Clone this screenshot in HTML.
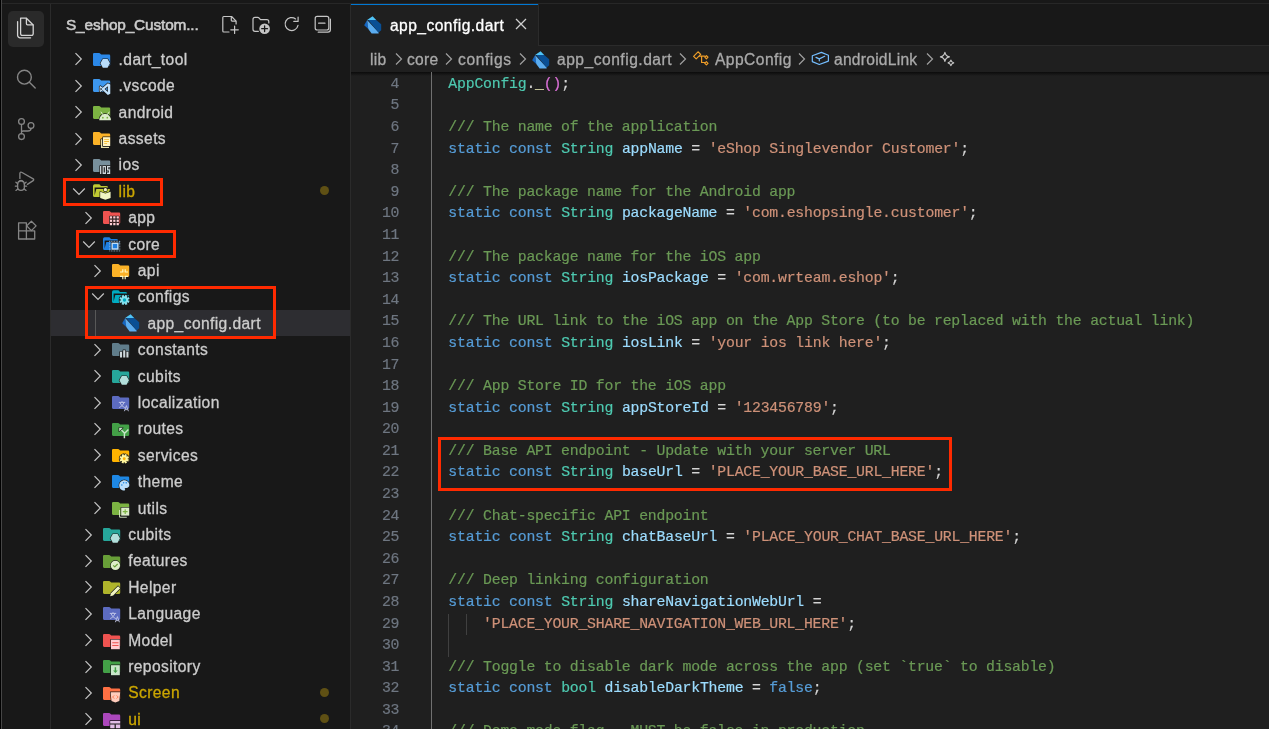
<!DOCTYPE html><html><head><meta charset="utf-8"><style>
*{margin:0;padding:0;box-sizing:border-box}
html,body{width:1269px;height:729px;overflow:hidden;background:#181818}
body{position:relative;font-family:"Liberation Sans",sans-serif;-webkit-font-smoothing:antialiased}
.a{position:absolute}
#root{position:absolute;left:0;top:0;width:1269px;height:729px;will-change:transform}
.mono{font-family:"Liberation Mono",monospace;font-size:14.8px;letter-spacing:-0.207px;white-space:pre;-webkit-text-stroke:0.2px currentColor}
.ln{position:absolute;left:359.3px;width:40px;text-align:right;color:#6e7681}
.cl{position:absolute;left:431px;color:#d4d4d4}
.c{color:#6a9955}.k{color:#569cd6}.t{color:#4ec9b0}.v{color:#9cdcfe}.s{color:#ce9178}.f{color:#dcdcaa}.p{color:#da70d6}
.row{position:absolute;left:51px;width:299px;height:26.4px}
.lbl{position:absolute;top:0;font-size:15.6px;line-height:26.4px;color:#cccccc;white-space:nowrap;letter-spacing:0.4px;-webkit-text-stroke:0.3px currentColor}
.red{position:absolute;border:3px solid #ff2a00}
.bc{position:absolute;top:47px;font-size:15.6px;line-height:26px;color:#a9a9a9;white-space:nowrap;letter-spacing:0.25px;-webkit-text-stroke:0.3px currentColor}
</style></head><body><div id="root"><div class="a" style="left:0;top:3px;width:1269px;height:1px;background:#272727"></div><div class="a" style="left:0;top:0;width:1px;height:729px;background:#000"></div><div class="a" style="left:1px;top:0;width:1px;height:729px;background:#464646"></div><div class="a" style="left:50px;top:4px;width:1px;height:725px;background:#2b2b2b"></div><div class="a" style="left:350px;top:4px;width:1px;height:725px;background:#2b2b2b"></div><div class="a" style="left:351px;top:4px;width:918px;height:41px;background:#181818"></div><div class="a" style="left:351px;top:45px;width:918px;height:1px;background:#2b2b2b"></div><div class="a" style="left:351px;top:46px;width:918px;height:683px;background:#1f1f1f"></div><div class="a" style="left:351px;top:4px;width:187px;height:42px;background:#1f1f1f"></div><div class="a" style="left:351px;top:4px;width:187px;height:1.2px;background:#0078d4"></div><div class="a" style="left:538px;top:4px;width:1px;height:41px;background:#2b2b2b"></div><div class="a" style="left:351px;top:72px;width:918px;height:4px;background:linear-gradient(#0b0b0b,rgba(31,31,31,0))"></div><div class="a" style="left:351px;top:72px;width:918px;height:657px;overflow:hidden"><div class="a" style="left:-351px;top:-72px;width:1269px;height:729px"><div class="ln mono" style="top:73.90px;line-height:21.586px">4</div><div class="cl mono" style="top:73.90px;line-height:21.586px">  <span class="t">AppConfig</span>.<span class="f">_</span><span class="p">()</span>;</div><div class="ln mono" style="top:95.49px;line-height:21.586px">5</div><div class="cl mono" style="top:95.49px;line-height:21.586px"></div><div class="ln mono" style="top:117.07px;line-height:21.586px">6</div><div class="cl mono" style="top:117.07px;line-height:21.586px">  <span class="c">/// The name of the application</span></div><div class="ln mono" style="top:138.66px;line-height:21.586px">7</div><div class="cl mono" style="top:138.66px;line-height:21.586px">  <span class="k">static</span> <span class="k">const</span> <span class="t">String</span> <span class="v">appName</span> = <span class="s">&#x27;eShop Singlevendor Customer&#x27;</span>;</div><div class="ln mono" style="top:160.24px;line-height:21.586px">8</div><div class="cl mono" style="top:160.24px;line-height:21.586px"></div><div class="ln mono" style="top:181.83px;line-height:21.586px">9</div><div class="cl mono" style="top:181.83px;line-height:21.586px">  <span class="c">/// The package name for the Android app</span></div><div class="ln mono" style="top:203.42px;line-height:21.586px">10</div><div class="cl mono" style="top:203.42px;line-height:21.586px">  <span class="k">static</span> <span class="k">const</span> <span class="t">String</span> <span class="v">packageName</span> = <span class="s">&#x27;com.eshopsingle.customer&#x27;</span>;</div><div class="ln mono" style="top:225.00px;line-height:21.586px">11</div><div class="cl mono" style="top:225.00px;line-height:21.586px"></div><div class="ln mono" style="top:246.59px;line-height:21.586px">12</div><div class="cl mono" style="top:246.59px;line-height:21.586px">  <span class="c">/// The package name for the iOS app</span></div><div class="ln mono" style="top:268.17px;line-height:21.586px">13</div><div class="cl mono" style="top:268.17px;line-height:21.586px">  <span class="k">static</span> <span class="k">const</span> <span class="t">String</span> <span class="v">iosPackage</span> = <span class="s">&#x27;com.wrteam.eshop&#x27;</span>;</div><div class="ln mono" style="top:289.76px;line-height:21.586px">14</div><div class="cl mono" style="top:289.76px;line-height:21.586px"></div><div class="ln mono" style="top:311.35px;line-height:21.586px">15</div><div class="cl mono" style="top:311.35px;line-height:21.586px">  <span class="c">/// The URL link to the iOS app on the App Store (to be replaced with the actual link)</span></div><div class="ln mono" style="top:332.93px;line-height:21.586px">16</div><div class="cl mono" style="top:332.93px;line-height:21.586px">  <span class="k">static</span> <span class="k">const</span> <span class="t">String</span> <span class="v">iosLink</span> = <span class="s">&#x27;your ios link here&#x27;</span>;</div><div class="ln mono" style="top:354.52px;line-height:21.586px">17</div><div class="cl mono" style="top:354.52px;line-height:21.586px"></div><div class="ln mono" style="top:376.10px;line-height:21.586px">18</div><div class="cl mono" style="top:376.10px;line-height:21.586px">  <span class="c">/// App Store ID for the iOS app</span></div><div class="ln mono" style="top:397.69px;line-height:21.586px">19</div><div class="cl mono" style="top:397.69px;line-height:21.586px">  <span class="k">static</span> <span class="k">const</span> <span class="t">String</span> <span class="v">appStoreId</span> = <span class="s">&#x27;123456789&#x27;</span>;</div><div class="ln mono" style="top:419.28px;line-height:21.586px">20</div><div class="cl mono" style="top:419.28px;line-height:21.586px"></div><div class="ln mono" style="top:440.86px;line-height:21.586px">21</div><div class="cl mono" style="top:440.86px;line-height:21.586px">  <span class="c">/// Base API endpoint - Update with your server URL</span></div><div class="ln mono" style="top:462.45px;line-height:21.586px">22</div><div class="cl mono" style="top:462.45px;line-height:21.586px">  <span class="k">static</span> <span class="k">const</span> <span class="t">String</span> <span class="v">baseUrl</span> = <span class="s">&#x27;PLACE_YOUR_BASE_URL_HERE&#x27;</span>;</div><div class="ln mono" style="top:484.03px;line-height:21.586px">23</div><div class="cl mono" style="top:484.03px;line-height:21.586px"></div><div class="ln mono" style="top:505.62px;line-height:21.586px">24</div><div class="cl mono" style="top:505.62px;line-height:21.586px">  <span class="c">/// Chat-specific API endpoint</span></div><div class="ln mono" style="top:527.21px;line-height:21.586px">25</div><div class="cl mono" style="top:527.21px;line-height:21.586px">  <span class="k">static</span> <span class="k">const</span> <span class="t">String</span> <span class="v">chatBaseUrl</span> = <span class="s">&#x27;PLACE_YOUR_CHAT_BASE_URL_HERE&#x27;</span>;</div><div class="ln mono" style="top:548.79px;line-height:21.586px">26</div><div class="cl mono" style="top:548.79px;line-height:21.586px"></div><div class="ln mono" style="top:570.38px;line-height:21.586px">27</div><div class="cl mono" style="top:570.38px;line-height:21.586px">  <span class="c">/// Deep linking configuration</span></div><div class="ln mono" style="top:591.96px;line-height:21.586px">28</div><div class="cl mono" style="top:591.96px;line-height:21.586px">  <span class="k">static</span> <span class="k">const</span> <span class="t">String</span> <span class="v">shareNavigationWebUrl</span> =</div><div class="ln mono" style="top:613.55px;line-height:21.586px">29</div><div class="cl mono" style="top:613.55px;line-height:21.586px">      <span class="s">&#x27;PLACE_YOUR_SHARE_NAVIGATION_WEB_URL_HERE&#x27;</span>;</div><div class="ln mono" style="top:635.14px;line-height:21.586px">30</div><div class="cl mono" style="top:635.14px;line-height:21.586px"></div><div class="ln mono" style="top:656.72px;line-height:21.586px">31</div><div class="cl mono" style="top:656.72px;line-height:21.586px">  <span class="c">/// Toggle to disable dark mode across the app (set `true` to disable)</span></div><div class="ln mono" style="top:678.31px;line-height:21.586px">32</div><div class="cl mono" style="top:678.31px;line-height:21.586px">  <span class="k">static</span> <span class="k">const</span> <span class="t">bool</span> <span class="v">disableDarkTheme</span> = <span class="k">false</span>;</div><div class="ln mono" style="top:699.89px;line-height:21.586px">33</div><div class="cl mono" style="top:699.89px;line-height:21.586px"></div><div class="ln mono" style="top:721.48px;line-height:21.586px">34</div><div class="cl mono" style="top:721.48px;line-height:21.586px">  <span class="c">/// Demo mode flag - MUST be false in production</span></div><div class="a" style="left:431px;top:72px;width:1px;height:657px;background:#707070"></div><div class="a" style="left:448.3px;top:613.55px;width:1px;height:21.59px;background:#404040"></div><div class="a" style="left:448.3px;top:635.14px;width:1px;height:21.59px;background:#404040"></div><div class="a" style="left:465.7px;top:613.55px;width:1px;height:21.59px;background:#404040"></div></div></div><div class="red" style="left:438px;top:437px;width:514px;height:54px"></div><div class="a" style="left:390px;top:4.6px;font-size:15.6px;line-height:41px;color:#ffffff;white-space:nowrap;letter-spacing:0.45px;-webkit-text-stroke:0.3px currentColor">app_config.dart</div><svg class="a" style="left:515px;top:18px" width="12" height="12" viewBox="0 0 12 12"><path d="M1 1L11 11M11 1L1 11" stroke="#d0d0d0" stroke-width="1.3" fill="none"/></svg><svg class="a" style="left:364px;top:16px" width="18" height="18" viewBox="0 0 18 18"><polygon fill="#4fc3f7" points="3.1,3.9 8.6,0.3 12.2,4"/><polygon fill="#1565c0" points="0.2,9.3 3.1,3.9 4.3,13"/><polygon fill="#5aacf0" points="3.1,3.9 14.6,16.6 14.6,17.4 7.6,17.4 4.3,13"/><polygon fill="#0a4f94" points="4.2,3.9 12.2,3.9 17.2,8.2 17.2,14.3 14.6,16.6"/></svg><div class="bc" style="left:370px">lib</div><svg class="a" style="left:394.5px;top:52px" width="8" height="14" viewBox="0 0 8 14"><path d="M1 1.5L6.5 7L1 12.5" stroke="#a0a0a0" stroke-width="1.2" fill="none"/></svg><div class="bc" style="left:407px">core</div><svg class="a" style="left:445px;top:52px" width="8" height="14" viewBox="0 0 8 14"><path d="M1 1.5L6.5 7L1 12.5" stroke="#a0a0a0" stroke-width="1.2" fill="none"/></svg><div class="bc" style="left:458px;letter-spacing:0.6px">configs</div><svg class="a" style="left:518.5px;top:52px" width="8" height="14" viewBox="0 0 8 14"><path d="M1 1.5L6.5 7L1 12.5" stroke="#a0a0a0" stroke-width="1.2" fill="none"/></svg><svg class="a" style="left:531.5px;top:51px" width="18" height="18" viewBox="0 0 18 18"><polygon fill="#4fc3f7" points="3.1,3.9 8.6,0.3 12.2,4"/><polygon fill="#1565c0" points="0.2,9.3 3.1,3.9 4.3,13"/><polygon fill="#5aacf0" points="3.1,3.9 14.6,16.6 14.6,17.4 7.6,17.4 4.3,13"/><polygon fill="#0a4f94" points="4.2,3.9 12.2,3.9 17.2,8.2 17.2,14.3 14.6,16.6"/></svg><div class="bc" style="left:557px;letter-spacing:0.5px">app_config.dart</div><svg class="a" style="left:679px;top:52px" width="8" height="14" viewBox="0 0 8 14"><path d="M1 1.5L6.5 7L1 12.5" stroke="#a0a0a0" stroke-width="1.2" fill="none"/></svg><div class="bc" style="left:715px;letter-spacing:0.45px">AppConfig</div><svg class="a" style="left:798px;top:52px" width="8" height="14" viewBox="0 0 8 14"><path d="M1 1.5L6.5 7L1 12.5" stroke="#a0a0a0" stroke-width="1.2" fill="none"/></svg><div class="bc" style="left:834px">androidLink</div><svg class="a" style="left:925.5px;top:52px" width="8" height="14" viewBox="0 0 8 14"><path d="M1 1.5L6.5 7L1 12.5" stroke="#a0a0a0" stroke-width="1.2" fill="none"/></svg><div class="a" style="left:66px;top:4.2px;font-size:15.4px;line-height:42px;color:#cccccc;white-space:nowrap;letter-spacing:-0.15px;-webkit-text-stroke:0.55px currentColor">S_eshop_Custom...</div><svg class="a" style="left:74.0px;top:52.30px" width="9" height="14" viewBox="0 0 9 14"><path d="M1.5 1.2L7.3 7L1.5 12.8" stroke="#c5c5c5" stroke-width="1.2" fill="none"/></svg><svg class="a" style="left:93.0px;top:52.90px;overflow:visible" width="20" height="20" viewBox="0 0 20 20"><path fill="#2b88e8" d="M0 1.1Q0 0 1.1 0H6.2Q6.7 0 7.1 .4L8.2 1.6H16.1Q17.2 1.6 17.2 2.7V11.8Q17.2 12.9 16.1 12.9H1.1Q0 12.9 0 11.8Z"/><g transform="translate(-1.6 -3.2) scale(0.8)"><g stroke="#181818" stroke-width="1.6" paint-order="stroke" stroke-linejoin="round"><path fill="#b8dcfa" d="M14.3 11.6h5.9l3 5.2-3 5.5h-5.9l-3-5.5z"/></g></g></svg><div class="lbl" style="left:118.6px;top:46.80px;color:#cccccc">.dart_tool</div><svg class="a" style="left:74.0px;top:78.70px" width="9" height="14" viewBox="0 0 9 14"><path d="M1.5 1.2L7.3 7L1.5 12.8" stroke="#c5c5c5" stroke-width="1.2" fill="none"/></svg><svg class="a" style="left:93.0px;top:79.30px;overflow:visible" width="20" height="20" viewBox="0 0 20 20"><path fill="#3d97ee" d="M0 1.1Q0 0 1.1 0H6.2Q6.7 0 7.1 .4L8.2 1.6H16.1Q17.2 1.6 17.2 2.7V11.8Q17.2 12.9 16.1 12.9H1.1Q0 12.9 0 11.8Z"/><g transform="translate(-1.6 -3.2) scale(0.8)"><g stroke="#181818" stroke-width="1.6" paint-order="stroke" stroke-linejoin="round"><path fill="#c0e0fb" d="M20.6 9.3l3 1.5v11.6l-3 1.5-6.4-5.9-3 2.3-1-0.6v-6.4l1-0.6 3 2.3zM13.6 16.6l-2.2-1.8v3.6zM20.6 13l-4.2 3.6 4.2 3.6z"/></g></g></svg><div class="lbl" style="left:118.6px;top:73.20px;color:#cccccc">.vscode</div><svg class="a" style="left:74.0px;top:105.10px" width="9" height="14" viewBox="0 0 9 14"><path d="M1.5 1.2L7.3 7L1.5 12.8" stroke="#c5c5c5" stroke-width="1.2" fill="none"/></svg><svg class="a" style="left:93.0px;top:105.70px;overflow:visible" width="20" height="20" viewBox="0 0 20 20"><path fill="#7cb342" d="M0 1.1Q0 0 1.1 0H6.2Q6.7 0 7.1 .4L8.2 1.6H16.1Q17.2 1.6 17.2 2.7V11.8Q17.2 12.9 16.1 12.9H1.1Q0 12.9 0 11.8Z"/><g transform="translate(-1.6 -3.2) scale(0.8)"><g stroke="#181818" stroke-width="1.6" paint-order="stroke" stroke-linejoin="round"><g transform="translate(17 16) scale(1.12) translate(-17 -17.5)"><path fill="#dcedc8" d="M10.6 22.6c0-3.8 2.9-6.8 6.5-6.8s6.5 3 6.5 6.8z"/><path stroke="#dcedc8" stroke-width="1.1" d="M12.4 13.2l2.2 3.4M21.8 13.2l-2.2 3.4" fill="none" paint-order="normal"/><circle cx="14.6" cy="19.8" r="1" fill="#7cb342" stroke="none"/><circle cx="19.6" cy="19.8" r="1" fill="#7cb342" stroke="none"/></g></g></g></svg><div class="lbl" style="left:118.6px;top:99.60px;color:#cccccc">android</div><svg class="a" style="left:74.0px;top:131.50px" width="9" height="14" viewBox="0 0 9 14"><path d="M1.5 1.2L7.3 7L1.5 12.8" stroke="#c5c5c5" stroke-width="1.2" fill="none"/></svg><svg class="a" style="left:93.0px;top:132.10px;overflow:visible" width="20" height="20" viewBox="0 0 20 20"><path fill="#fbb227" d="M0 1.1Q0 0 1.1 0H6.2Q6.7 0 7.1 .4L8.2 1.6H16.1Q17.2 1.6 17.2 2.7V11.8Q17.2 12.9 16.1 12.9H1.1Q0 12.9 0 11.8Z"/><g transform="translate(-1.6 -3.2) scale(0.8)"><g stroke="#181818" stroke-width="1.6" paint-order="stroke" stroke-linejoin="round"><path fill="#e8dfa8" d="M12 13h2v9h8v2h-10z"/><path fill="#fff3c0" d="M14.5 10.5h9v11h-9z"/><path fill="#f5b82a" stroke="none" d="M16 12.6h6v1.1h-6zM16 15.3h6v1.1h-6zM16 18h3.5v1.1h-3.5z"/></g></g></svg><div class="lbl" style="left:118.6px;top:126.00px;color:#cccccc">assets</div><svg class="a" style="left:74.0px;top:157.90px" width="9" height="14" viewBox="0 0 9 14"><path d="M1.5 1.2L7.3 7L1.5 12.8" stroke="#c5c5c5" stroke-width="1.2" fill="none"/></svg><svg class="a" style="left:93.0px;top:158.50px;overflow:visible" width="20" height="20" viewBox="0 0 20 20"><path fill="#78909c" d="M0 1.1Q0 0 1.1 0H6.2Q6.7 0 7.1 .4L8.2 1.6H16.1Q17.2 1.6 17.2 2.7V11.8Q17.2 12.9 16.1 12.9H1.1Q0 12.9 0 11.8Z"/><g transform="translate(-1.6 -3.2) scale(0.8)"><g stroke="#181818" stroke-width="1.6" paint-order="stroke" stroke-linejoin="round"><path fill="#cfd8dc" d="M10.8 12.6h1.6v10h-1.6zM14 12.6h4.2v10h-4.2zM15.4 14.2v6.8h1.4v-6.8zM19.5 12.6h4v1.6h-2.4v2.6h2.4v5.8h-4v-1.6h2.4v-2.6h-2.4z"/></g></g></svg><div class="lbl" style="left:118.6px;top:152.40px;color:#cccccc">ios</div><svg class="a" style="left:72.0px;top:186.80px" width="14" height="9" viewBox="0 0 14 9"><path d="M1.2 1.5L7 7.3L12.8 1.5" stroke="#c5c5c5" stroke-width="1.2" fill="none"/></svg><svg class="a" style="left:93.0px;top:184.90px;overflow:visible" width="20" height="20" viewBox="0 0 20 20"><g transform="translate(-1.6 -3.9) scale(0.8)"><path fill="#c0ca33" d="M19 20H4a2 2 0 0 1-2-2V6a2 2 0 0 1 2-2h6l2 2h7a2 2 0 0 1 2 2H4v10l2.14-8h17.07l-2.28 8.5c-.23.87-1.01 1.5-1.93 1.5z"/></g><g transform="translate(-1.6 -3.2) scale(0.8)"><g stroke="#181818" stroke-width="1.6" paint-order="stroke" stroke-linejoin="round"><g transform="translate(0 -2)"><path fill="#f0f4c3" d="M11 14.5l6.5 2.2 6.5-2.2v7.8l-6.5 2.2-6.5-2.2z"/><circle cx="17.5" cy="11.8" r="2" fill="#f0f4c3"/></g></g></g></svg><div class="lbl" style="left:118.6px;top:178.80px;color:#cca700">lib</div><div class="a" style="left:320px;top:185.90px;width:9px;height:9px;border-radius:50%;background:#5f5014"></div><svg class="a" style="left:83.6px;top:210.70px" width="9" height="14" viewBox="0 0 9 14"><path d="M1.5 1.2L7.3 7L1.5 12.8" stroke="#c5c5c5" stroke-width="1.2" fill="none"/></svg><svg class="a" style="left:102.6px;top:211.30px;overflow:visible" width="20" height="20" viewBox="0 0 20 20"><path fill="#ef5350" d="M0 1.1Q0 0 1.1 0H6.2Q6.7 0 7.1 .4L8.2 1.6H16.1Q17.2 1.6 17.2 2.7V11.8Q17.2 12.9 16.1 12.9H1.1Q0 12.9 0 11.8Z"/><g transform="translate(-1.6 -3.2) scale(0.8)"><g stroke="#181818" stroke-width="1.6" paint-order="stroke" stroke-linejoin="round"><rect x="10.6" y="10.6" width="2.8" height="2.8" fill="#ffcdd2"/><rect x="10.6" y="14.8" width="2.8" height="2.8" fill="#ffcdd2"/><rect x="10.6" y="19.0" width="2.8" height="2.8" fill="#ffcdd2"/><rect x="14.8" y="10.6" width="2.8" height="2.8" fill="#ffcdd2"/><rect x="14.8" y="14.8" width="2.8" height="2.8" fill="#ffcdd2"/><rect x="14.8" y="19.0" width="2.8" height="2.8" fill="#ffcdd2"/><rect x="19.0" y="10.6" width="2.8" height="2.8" fill="#ffcdd2"/><rect x="19.0" y="14.8" width="2.8" height="2.8" fill="#ffcdd2"/><rect x="19.0" y="19.0" width="2.8" height="2.8" fill="#ffcdd2"/></g></g></svg><div class="lbl" style="left:128.2px;top:205.20px;color:#cccccc">app</div><svg class="a" style="left:81.6px;top:239.60px" width="14" height="9" viewBox="0 0 14 9"><path d="M1.2 1.5L7 7.3L12.8 1.5" stroke="#c5c5c5" stroke-width="1.2" fill="none"/></svg><svg class="a" style="left:102.6px;top:237.70px;overflow:visible" width="20" height="20" viewBox="0 0 20 20"><g transform="translate(-1.6 -3.9) scale(0.8)"><path fill="#1e7ee0" d="M19 20H4a2 2 0 0 1-2-2V6a2 2 0 0 1 2-2h6l2 2h7a2 2 0 0 1 2 2H4v10l2.14-8h17.07l-2.28 8.5c-.23.87-1.01 1.5-1.93 1.5z"/></g><g transform="translate(-1.6 -3.2) scale(0.8)"><g stroke="#181818" stroke-width="1.6" paint-order="stroke" stroke-linejoin="round"><g transform="translate(-0.5 -1.8)"><path fill="#bbdefb" d="M13 11.5h9v9h-9z"/><path fill="#1e7ee0" stroke="none" d="M14.8 13.3h5.4v5.4h-5.4z"/><path fill="none" stroke="#bbdefb" stroke-width="0.9" stroke-dasharray="1 1" paint-order="normal" d="M10.5 10h13M10.5 22h13M11 10v12M23.5 10v12"/></g></g></g></svg><div class="lbl" style="left:128.2px;top:231.60px;color:#cccccc">core</div><svg class="a" style="left:93.2px;top:263.50px" width="9" height="14" viewBox="0 0 9 14"><path d="M1.5 1.2L7.3 7L1.5 12.8" stroke="#c5c5c5" stroke-width="1.2" fill="none"/></svg><svg class="a" style="left:112.2px;top:264.10px;overflow:visible" width="20" height="20" viewBox="0 0 20 20"><path fill="#fbb227" d="M0 1.1Q0 0 1.1 0H6.2Q6.7 0 7.1 .4L8.2 1.6H16.1Q17.2 1.6 17.2 2.7V11.8Q17.2 12.9 16.1 12.9H1.1Q0 12.9 0 11.8Z"/><g transform="translate(-1.6 -3.2) scale(0.8)"><g stroke="#181818" stroke-width="1.6" paint-order="stroke" stroke-linejoin="round"><path fill="none" stroke="#fff9c4" stroke-width="1.5" paint-order="normal" d="M15.5 10.5v3.5h-3.5M18.5 10.5v3.5h3.5M15.5 23v-3.5h-3.5M18.5 23v-3.5h3.5"/></g></g></svg><div class="lbl" style="left:137.8px;top:258.00px;color:#cccccc">api</div><svg class="a" style="left:91.2px;top:292.40px" width="14" height="9" viewBox="0 0 14 9"><path d="M1.2 1.5L7 7.3L12.8 1.5" stroke="#c5c5c5" stroke-width="1.2" fill="none"/></svg><svg class="a" style="left:112.2px;top:290.50px;overflow:visible" width="20" height="20" viewBox="0 0 20 20"><g transform="translate(-1.6 -3.9) scale(0.8)"><path fill="#00acc1" d="M19 20H4a2 2 0 0 1-2-2V6a2 2 0 0 1 2-2h6l2 2h7a2 2 0 0 1 2 2H4v10l2.14-8h17.07l-2.28 8.5c-.23.87-1.01 1.5-1.93 1.5z"/></g><g transform="translate(-1.6 -3.2) scale(0.8)"><g stroke="#181818" stroke-width="1.6" paint-order="stroke" stroke-linejoin="round"><path fill="#84e1ee" d="M22.19 15.43 L22.17 15.72 L24.01 16.29 L22.90 18.96 L21.20 18.07 L21.01 18.29 L20.69 18.61 L20.47 18.80 L21.36 20.50 L18.69 21.61 L18.12 19.77 L17.83 19.79 L17.37 19.79 L17.08 19.77 L16.51 21.61 L13.84 20.50 L14.73 18.80 L14.51 18.61 L14.19 18.29 L14.00 18.07 L12.30 18.96 L11.19 16.29 L13.03 15.72 L13.01 15.43 L13.01 14.97 L13.03 14.68 L11.19 14.11 L12.30 11.44 L14.00 12.33 L14.19 12.11 L14.51 11.79 L14.73 11.60 L13.84 9.90 L16.51 8.79 L17.08 10.63 L17.37 10.61 L17.83 10.61 L18.12 10.63 L18.69 8.79 L21.36 9.90 L20.47 11.60 L20.69 11.79 L21.01 12.11 L21.20 12.33 L22.90 11.44 L24.01 14.11 L22.17 14.68 L22.19 14.97z"/><circle cx="17.6" cy="15.2" r="2.1" fill="#00acc1" stroke="none"/></g></g></svg><div class="lbl" style="left:137.8px;top:284.40px;color:#cccccc">configs</div><div class="a" style="left:51px;top:309.80px;width:299px;height:26.4px;background:#2d2d31"></div><div class="a" style="left:95px;top:309.80px;width:1px;height:26.4px;background:#585858"></div><svg class="a" style="left:122.1px;top:314.40px" width="18" height="18" viewBox="0 0 18 18"><polygon fill="#4fc3f7" points="3.1,3.9 8.6,0.3 12.2,4"/><polygon fill="#1565c0" points="0.2,9.3 3.1,3.9 4.3,13"/><polygon fill="#5aacf0" points="3.1,3.9 14.6,16.6 14.6,17.4 7.6,17.4 4.3,13"/><polygon fill="#0a4f94" points="4.2,3.9 12.2,3.9 17.2,8.2 17.2,14.3 14.6,16.6"/></svg><div class="lbl" style="left:147.4px;top:310.80px;color:#cccccc">app_config.dart</div><svg class="a" style="left:93.2px;top:342.70px" width="9" height="14" viewBox="0 0 9 14"><path d="M1.5 1.2L7.3 7L1.5 12.8" stroke="#c5c5c5" stroke-width="1.2" fill="none"/></svg><svg class="a" style="left:112.2px;top:343.30px;overflow:visible" width="20" height="20" viewBox="0 0 20 20"><path fill="#607d8b" d="M0 1.1Q0 0 1.1 0H6.2Q6.7 0 7.1 .4L8.2 1.6H16.1Q17.2 1.6 17.2 2.7V11.8Q17.2 12.9 16.1 12.9H1.1Q0 12.9 0 11.8Z"/><g transform="translate(-1.6 -3.2) scale(0.8)"><g stroke="#181818" stroke-width="1.6" paint-order="stroke" stroke-linejoin="round"><path fill="#cfd8dc" d="M12 15h2.6v7h-2.6zM16 13h2.6v9h-2.6zM20 15h2.6v7h-2.6z"/></g></g></svg><div class="lbl" style="left:137.8px;top:337.20px;color:#cccccc">constants</div><svg class="a" style="left:93.2px;top:369.10px" width="9" height="14" viewBox="0 0 9 14"><path d="M1.5 1.2L7.3 7L1.5 12.8" stroke="#c5c5c5" stroke-width="1.2" fill="none"/></svg><svg class="a" style="left:112.2px;top:369.70px;overflow:visible" width="20" height="20" viewBox="0 0 20 20"><path fill="#26a69a" d="M0 1.1Q0 0 1.1 0H6.2Q6.7 0 7.1 .4L8.2 1.6H16.1Q17.2 1.6 17.2 2.7V11.8Q17.2 12.9 16.1 12.9H1.1Q0 12.9 0 11.8Z"/><g transform="translate(-1.6 -3.2) scale(0.8)"><g stroke="#181818" stroke-width="1.6" paint-order="stroke" stroke-linejoin="round"><path fill="#b2dfdb" d="M14.3 11.6h5.9l3 5.2-3 5.5h-5.9l-3-5.5z"/></g></g></svg><div class="lbl" style="left:137.8px;top:363.60px;color:#cccccc">cubits</div><svg class="a" style="left:93.2px;top:395.50px" width="9" height="14" viewBox="0 0 9 14"><path d="M1.5 1.2L7.3 7L1.5 12.8" stroke="#c5c5c5" stroke-width="1.2" fill="none"/></svg><svg class="a" style="left:112.2px;top:396.10px;overflow:visible" width="20" height="20" viewBox="0 0 20 20"><path fill="#5c6bc0" d="M0 1.1Q0 0 1.1 0H6.2Q6.7 0 7.1 .4L8.2 1.6H16.1Q17.2 1.6 17.2 2.7V11.8Q17.2 12.9 16.1 12.9H1.1Q0 12.9 0 11.8Z"/><g transform="translate(-1.6 -3.2) scale(0.8)"><g stroke="#181818" stroke-width="1.6" paint-order="stroke" stroke-linejoin="round"><path fill="none" stroke="#c5cae9" stroke-width="1.1" paint-order="normal" d="M10.5 12h8M14.5 10.5v1.5M12 12c1 3 3 5 6 6.5M17 12c-1 3-3 5-6 6.5M17.5 23l2.5-7 2.5 7M18.5 21h3"/></g></g></svg><div class="lbl" style="left:137.8px;top:390.00px;color:#cccccc">localization</div><svg class="a" style="left:93.2px;top:421.90px" width="9" height="14" viewBox="0 0 9 14"><path d="M1.5 1.2L7.3 7L1.5 12.8" stroke="#c5c5c5" stroke-width="1.2" fill="none"/></svg><svg class="a" style="left:112.2px;top:422.50px;overflow:visible" width="20" height="20" viewBox="0 0 20 20"><path fill="#43a047" d="M0 1.1Q0 0 1.1 0H6.2Q6.7 0 7.1 .4L8.2 1.6H16.1Q17.2 1.6 17.2 2.7V11.8Q17.2 12.9 16.1 12.9H1.1Q0 12.9 0 11.8Z"/><g transform="translate(-1.6 -3.2) scale(0.8)"><g stroke="#181818" stroke-width="1.6" paint-order="stroke" stroke-linejoin="round"><path fill="none" stroke="#c8e6c9" stroke-width="1.8" paint-order="normal" d="M12.5 11.5l5 5v6.5M22.5 12l-5 5"/><path fill="#c8e6c9" d="M11 10h4.5l-4.5 4.5z"/></g></g></svg><div class="lbl" style="left:137.8px;top:416.40px;color:#cccccc">routes</div><svg class="a" style="left:93.2px;top:448.30px" width="9" height="14" viewBox="0 0 9 14"><path d="M1.5 1.2L7.3 7L1.5 12.8" stroke="#c5c5c5" stroke-width="1.2" fill="none"/></svg><svg class="a" style="left:112.2px;top:448.90px;overflow:visible" width="20" height="20" viewBox="0 0 20 20"><path fill="#ffb300" d="M0 1.1Q0 0 1.1 0H6.2Q6.7 0 7.1 .4L8.2 1.6H16.1Q17.2 1.6 17.2 2.7V11.8Q17.2 12.9 16.1 12.9H1.1Q0 12.9 0 11.8Z"/><g transform="translate(-1.6 -3.2) scale(0.8)"><g stroke="#181818" stroke-width="1.6" paint-order="stroke" stroke-linejoin="round"><path fill="#fff59d" d="M21.59 16.41 L21.57 16.68 L23.21 17.21 L22.19 19.67 L20.66 18.88 L20.49 19.08 L20.18 19.39 L19.98 19.56 L20.77 21.09 L18.31 22.11 L17.78 20.47 L17.51 20.49 L17.09 20.49 L16.82 20.47 L16.29 22.11 L13.83 21.09 L14.62 19.56 L14.42 19.39 L14.11 19.08 L13.94 18.88 L12.41 19.67 L11.39 17.21 L13.03 16.68 L13.01 16.41 L13.01 15.99 L13.03 15.72 L11.39 15.19 L12.41 12.73 L13.94 13.52 L14.11 13.32 L14.42 13.01 L14.62 12.84 L13.83 11.31 L16.29 10.29 L16.82 11.93 L17.09 11.91 L17.51 11.91 L17.78 11.93 L18.31 10.29 L20.77 11.31 L19.98 12.84 L20.18 13.01 L20.49 13.32 L20.66 13.52 L22.19 12.73 L23.21 15.19 L21.57 15.72 L21.59 15.99z"/><circle cx="17.3" cy="16.2" r="1.8" fill="#ffb300" stroke="none"/></g></g></svg><div class="lbl" style="left:137.8px;top:442.80px;color:#cccccc">services</div><svg class="a" style="left:93.2px;top:474.70px" width="9" height="14" viewBox="0 0 9 14"><path d="M1.5 1.2L7.3 7L1.5 12.8" stroke="#c5c5c5" stroke-width="1.2" fill="none"/></svg><svg class="a" style="left:112.2px;top:475.30px;overflow:visible" width="20" height="20" viewBox="0 0 20 20"><path fill="#1e88e5" d="M0 1.1Q0 0 1.1 0H6.2Q6.7 0 7.1 .4L8.2 1.6H16.1Q17.2 1.6 17.2 2.7V11.8Q17.2 12.9 16.1 12.9H1.1Q0 12.9 0 11.8Z"/><g transform="translate(-1.6 -3.2) scale(0.8)"><g stroke="#181818" stroke-width="1.6" paint-order="stroke" stroke-linejoin="round"><path fill="#bbdefb" d="M17.5 10.5c-3.6 0-6.5 2.9-6.5 6.5s2.9 6.5 6.5 6.5c.6 0 1-.4 1-1 0-.3-.1-.5-.3-.7-.2-.2-.3-.4-.3-.7 0-.6.4-1 1-1h1.2c2 0 3.6-1.6 3.6-3.6 0-3.3-2.9-6-6.5-6z"/><circle cx="14.3" cy="16.5" r="1" fill="#1e88e5" stroke="none"/><circle cx="16.5" cy="13.6" r="1" fill="#1e88e5" stroke="none"/><circle cx="19.8" cy="13.8" r="1" fill="#1e88e5" stroke="none"/></g></g></svg><div class="lbl" style="left:137.8px;top:469.20px;color:#cccccc">theme</div><svg class="a" style="left:93.2px;top:501.10px" width="9" height="14" viewBox="0 0 9 14"><path d="M1.5 1.2L7.3 7L1.5 12.8" stroke="#c5c5c5" stroke-width="1.2" fill="none"/></svg><svg class="a" style="left:112.2px;top:501.70px;overflow:visible" width="20" height="20" viewBox="0 0 20 20"><path fill="#7cb342" d="M0 1.1Q0 0 1.1 0H6.2Q6.7 0 7.1 .4L8.2 1.6H16.1Q17.2 1.6 17.2 2.7V11.8Q17.2 12.9 16.1 12.9H1.1Q0 12.9 0 11.8Z"/><g transform="translate(-1.6 -3.2) scale(0.8)"><g stroke="#181818" stroke-width="1.6" paint-order="stroke" stroke-linejoin="round"><path fill="none" stroke="#dcedc8" stroke-width="1.2" paint-order="normal" d="M11.5 14v9h9"/><path fill="#dcedc8" d="M13.5 11h10v10h-10z"/><path fill="none" stroke="#7cb342" stroke-width="1.4" paint-order="normal" d="M18.5 13v6M15.5 16h6" stroke-linejoin="miter"/></g></g></svg><div class="lbl" style="left:137.8px;top:495.60px;color:#cccccc">utils</div><svg class="a" style="left:83.6px;top:527.50px" width="9" height="14" viewBox="0 0 9 14"><path d="M1.5 1.2L7.3 7L1.5 12.8" stroke="#c5c5c5" stroke-width="1.2" fill="none"/></svg><svg class="a" style="left:102.6px;top:528.10px;overflow:visible" width="20" height="20" viewBox="0 0 20 20"><path fill="#26a69a" d="M0 1.1Q0 0 1.1 0H6.2Q6.7 0 7.1 .4L8.2 1.6H16.1Q17.2 1.6 17.2 2.7V11.8Q17.2 12.9 16.1 12.9H1.1Q0 12.9 0 11.8Z"/><g transform="translate(-1.6 -3.2) scale(0.8)"><g stroke="#181818" stroke-width="1.6" paint-order="stroke" stroke-linejoin="round"><path fill="#b2dfdb" d="M14.3 11.6h5.9l3 5.2-3 5.5h-5.9l-3-5.5z"/></g></g></svg><div class="lbl" style="left:128.2px;top:522.00px;color:#cccccc">cubits</div><svg class="a" style="left:83.6px;top:553.90px" width="9" height="14" viewBox="0 0 9 14"><path d="M1.5 1.2L7.3 7L1.5 12.8" stroke="#c5c5c5" stroke-width="1.2" fill="none"/></svg><svg class="a" style="left:102.6px;top:554.50px;overflow:visible" width="20" height="20" viewBox="0 0 20 20"><path fill="#689f38" d="M0 1.1Q0 0 1.1 0H6.2Q6.7 0 7.1 .4L8.2 1.6H16.1Q17.2 1.6 17.2 2.7V11.8Q17.2 12.9 16.1 12.9H1.1Q0 12.9 0 11.8Z"/><g transform="translate(-1.6 -3.2) scale(0.8)"><g stroke="#181818" stroke-width="1.6" paint-order="stroke" stroke-linejoin="round"><circle cx="17.5" cy="17" r="5.8" fill="#dcedc8"/><path fill="none" stroke="#689f38" stroke-width="1.5" paint-order="normal" d="M14.8 17l1.9 1.9 3.6-3.6"/></g></g></svg><div class="lbl" style="left:128.2px;top:548.40px;color:#cccccc">features</div><svg class="a" style="left:83.6px;top:580.30px" width="9" height="14" viewBox="0 0 9 14"><path d="M1.5 1.2L7.3 7L1.5 12.8" stroke="#c5c5c5" stroke-width="1.2" fill="none"/></svg><svg class="a" style="left:102.6px;top:580.90px;overflow:visible" width="20" height="20" viewBox="0 0 20 20"><path fill="#afb42b" d="M0 1.1Q0 0 1.1 0H6.2Q6.7 0 7.1 .4L8.2 1.6H16.1Q17.2 1.6 17.2 2.7V11.8Q17.2 12.9 16.1 12.9H1.1Q0 12.9 0 11.8Z"/><g transform="translate(-1.6 -3.2) scale(0.8)"><g stroke="#181818" stroke-width="1.6" paint-order="stroke" stroke-linejoin="round"><path fill="#f0f4c3" d="M20.8 10.5l2.7 2.7-8.8 8.8-3.7 1 1-3.7z"/></g></g></svg><div class="lbl" style="left:128.2px;top:574.80px;color:#cccccc">Helper</div><svg class="a" style="left:83.6px;top:606.70px" width="9" height="14" viewBox="0 0 9 14"><path d="M1.5 1.2L7.3 7L1.5 12.8" stroke="#c5c5c5" stroke-width="1.2" fill="none"/></svg><svg class="a" style="left:102.6px;top:607.30px;overflow:visible" width="20" height="20" viewBox="0 0 20 20"><path fill="#5c6bc0" d="M0 1.1Q0 0 1.1 0H6.2Q6.7 0 7.1 .4L8.2 1.6H16.1Q17.2 1.6 17.2 2.7V11.8Q17.2 12.9 16.1 12.9H1.1Q0 12.9 0 11.8Z"/><g transform="translate(-1.6 -3.2) scale(0.8)"><g stroke="#181818" stroke-width="1.6" paint-order="stroke" stroke-linejoin="round"><path fill="none" stroke="#c5cae9" stroke-width="1.1" paint-order="normal" d="M10.5 12h8M14.5 10.5v1.5M12 12c1 3 3 5 6 6.5M17 12c-1 3-3 5-6 6.5M17.5 23l2.5-7 2.5 7M18.5 21h3"/></g></g></svg><div class="lbl" style="left:128.2px;top:601.20px;color:#cccccc">Language</div><svg class="a" style="left:83.6px;top:633.10px" width="9" height="14" viewBox="0 0 9 14"><path d="M1.5 1.2L7.3 7L1.5 12.8" stroke="#c5c5c5" stroke-width="1.2" fill="none"/></svg><svg class="a" style="left:102.6px;top:633.70px;overflow:visible" width="20" height="20" viewBox="0 0 20 20"><path fill="#ef5350" d="M0 1.1Q0 0 1.1 0H6.2Q6.7 0 7.1 .4L8.2 1.6H16.1Q17.2 1.6 17.2 2.7V11.8Q17.2 12.9 16.1 12.9H1.1Q0 12.9 0 11.8Z"/><g transform="translate(-1.6 -3.2) scale(0.8)"><g stroke="#181818" stroke-width="1.6" paint-order="stroke" stroke-linejoin="round"><path fill="#ffcdd2" d="M12 11h11v12h-11z"/><path fill="#ef5350" stroke="none" d="M13.6 14.3h7.8v1.3h-7.8zM13.6 17.6h7.8v1.3h-7.8z"/></g></g></svg><div class="lbl" style="left:128.2px;top:627.60px;color:#cccccc">Model</div><svg class="a" style="left:83.6px;top:659.50px" width="9" height="14" viewBox="0 0 9 14"><path d="M1.5 1.2L7.3 7L1.5 12.8" stroke="#c5c5c5" stroke-width="1.2" fill="none"/></svg><svg class="a" style="left:102.6px;top:660.10px;overflow:visible" width="20" height="20" viewBox="0 0 20 20"><path fill="#43a047" d="M0 1.1Q0 0 1.1 0H6.2Q6.7 0 7.1 .4L8.2 1.6H16.1Q17.2 1.6 17.2 2.7V11.8Q17.2 12.9 16.1 12.9H1.1Q0 12.9 0 11.8Z"/><g transform="translate(-1.6 -3.2) scale(0.8)"><g stroke="#181818" stroke-width="1.6" paint-order="stroke" stroke-linejoin="round"><path fill="#c8e6c9" d="M12 10.5h11v12.5h-11z"/><path fill="#43a047" stroke="none" d="M16.6 13h1.8v4h2l-2.9 3.2-2.9-3.2h2z"/></g></g></svg><div class="lbl" style="left:128.2px;top:654.00px;color:#cccccc">repository</div><svg class="a" style="left:83.6px;top:685.90px" width="9" height="14" viewBox="0 0 9 14"><path d="M1.5 1.2L7.3 7L1.5 12.8" stroke="#c5c5c5" stroke-width="1.2" fill="none"/></svg><svg class="a" style="left:102.6px;top:686.50px;overflow:visible" width="20" height="20" viewBox="0 0 20 20"><path fill="#ff7043" d="M0 1.1Q0 0 1.1 0H6.2Q6.7 0 7.1 .4L8.2 1.6H16.1Q17.2 1.6 17.2 2.7V11.8Q17.2 12.9 16.1 12.9H1.1Q0 12.9 0 11.8Z"/><g transform="translate(-1.6 -3.2) scale(0.8)"><g stroke="#181818" stroke-width="1.6" paint-order="stroke" stroke-linejoin="round"><path fill="#ffccbc" d="M11.5 10.5h12l-1.1 11-4.9 1.8-4.9-1.8z"/><path fill="none" stroke="#ff7043" stroke-width="1.1" paint-order="normal" d="M16 14.5l-2 2 2 2M19 14.5l2 2-2 2"/></g></g></svg><div class="lbl" style="left:128.2px;top:680.40px;color:#cca700">Screen</div><div class="a" style="left:320px;top:687.50px;width:9px;height:9px;border-radius:50%;background:#5f5014"></div><svg class="a" style="left:83.6px;top:712.30px" width="9" height="14" viewBox="0 0 9 14"><path d="M1.5 1.2L7.3 7L1.5 12.8" stroke="#c5c5c5" stroke-width="1.2" fill="none"/></svg><svg class="a" style="left:102.6px;top:712.90px;overflow:visible" width="20" height="20" viewBox="0 0 20 20"><path fill="#ab47bc" d="M0 1.1Q0 0 1.1 0H6.2Q6.7 0 7.1 .4L8.2 1.6H16.1Q17.2 1.6 17.2 2.7V11.8Q17.2 12.9 16.1 12.9H1.1Q0 12.9 0 11.8Z"/><g transform="translate(-1.6 -3.2) scale(0.8)"><g stroke="#181818" stroke-width="1.6" paint-order="stroke" stroke-linejoin="round"><path fill="#e1bee7" d="M11 14h12.5v3h-12.5zM11 18.5h5.5v4.5h-5.5zM18 18.5h5.5v4.5h-5.5z"/></g></g></svg><div class="lbl" style="left:128.2px;top:706.80px;color:#cca700">ui</div><div class="a" style="left:320px;top:713.90px;width:9px;height:9px;border-radius:50%;background:#5f5014"></div><div class="red" style="left:63px;top:178px;width:100px;height:28px"></div><div class="red" style="left:76px;top:230px;width:100px;height:28px"></div><div class="red" style="left:85px;top:286px;width:191px;height:53px"></div><div class="a" style="left:8px;top:11px;width:36px;height:36px;border-radius:5px;background:#2a2a2a"></div><svg class="a" style="left:0;top:0" width="50" height="260" viewBox="0 0 50 260" fill="none" stroke-linecap="round" stroke-linejoin="round"><g stroke="#d4d4d4" stroke-width="1.3"><path d="M20.6 18.2h5.8l6.8 6.8v8.8a1.6 1.6 0 0 1-1.6 1.6h-9.4a1.6 1.6 0 0 1-1.6-1.6z"/><path d="M26.4 18.4v5.2a1.2 1.2 0 0 0 1.2 1.2h5.4"/><path d="M17.6 21.6v13.6a2.6 2.6 0 0 0 2.6 2.6h10.4"/></g><g stroke="#868686" stroke-width="1.4"><circle cx="24.4" cy="77.2" r="6.9"/><path d="M29.4 82.3l5.8 5.8"/></g><g stroke="#868686" stroke-width="1.3"><circle cx="21.5" cy="121.5" r="2.9"/><circle cx="31" cy="125.6" r="2.9"/><circle cx="21.5" cy="136.6" r="2.9"/><path d="M21.5 124.4v9.3M21.5 132.2c0-1 .6-1.2 1.6-1.2h4.6c1.8 0 3.3-1.2 3.3-2.5"/></g><g stroke="#868686" stroke-width="1.3"><path d="M19.9 178.4v-5.2c0-.9.9-1.4 1.7-.9l11.6 6.6c.7.4.7 1.3 0 1.7l-5.8 3.8"/><path d="M17.6 184.5c0-2.2 1.6-3.6 3.4-3.6s3.4 1.4 3.4 3.6v2.4c0 2.2-1.6 3.4-3.4 3.4s-3.4-1.2-3.4-3.4z"/><path d="M19 181.8c.3-.8 1.1-1.3 2-1.3s1.7.5 2 1.3"/><path d="M15.9 182.2l1.9 1.6M26.1 182.2l-1.9 1.6M15.4 186.2h2.2M26.6 186.2h-2.2M15.9 190.4l1.9-1.5M26.1 190.4l-1.9-1.5"/></g><g stroke="#868686" stroke-width="1.3"><path d="M18.6 222.8h7.8v8.1h8.3v8.1h-16.1z"/><path d="M18.6 230.9h7.8v8.1"/><path d="M31.4 221.2l4.7 4.7-4.7 4.7-4.7-4.7z"/></g></svg><svg class="a" style="left:210px;top:0" width="130" height="45" viewBox="210 0 130 45" fill="none" stroke-linecap="round" stroke-linejoin="round"><g stroke="#c5c5c5" stroke-width="1.2"><path d="M229 32h-5.3a.9.9 0 0 1-.9-.9V17.4a.9.9 0 0 1 .9-.9h7.9l4.5 4.6v2.8"/><path d="M231.3 16.8v3.5a.8.8 0 0 0 .8.8h3.6"/><path d="M234.6 26.1v7.4M230.8 29.8h7.5"/><path d="M258.4 31.3h-3.4a2 2 0 0 1-2-2V19.3a2 2 0 0 1 2-2h2.6c.7 0 1.2.3 1.6.8l.8 1c.3.4.8.6 1.3.6h5.5a2 2 0 0 1 2 2v1.2"/><path d="M298 25.4A6.5 6.5 0 1 1 295.6 18.9"/><path d="M298.1 17.1v4.3h-4.3"/><rect x="315.2" y="16.4" width="13.6" height="13.6" rx="2"/><path d="M318.6 23.2h6.4"/><path d="M318.2 32.2h9.6a2.6 2.6 0 0 0 2.6-2.6v-10.4"/></g><circle cx="264.6" cy="28.7" r="5.3" fill="#c5c5c5"/><path d="M264.6 25.8v5.8M261.7 28.7h5.8" stroke="#181818" stroke-width="1.3"/></svg><svg class="a" style="left:680px;top:45px" width="290" height="26" viewBox="680 45 290 26" fill="none" stroke-linecap="round" stroke-linejoin="round"><g stroke="#ee9d28" stroke-width="1.2"><path d="M693.6 56.3l4.4-4.5 2.7 2.6-4.5 4.5z"/><path d="M699.6 56.2h5M701.6 56.2v6.3h3"/><path d="M706.4 55.6l1.6 1.6-1.6 1.6-1.6-1.6z"/><path d="M706.4 61.7l1.6 1.6-1.6 1.6-1.6-1.6z"/></g><g stroke="#75beff" stroke-width="1.2"><path d="M821.4 52.4l7 2.9v5.8l-9.1 3.4-7-2.9v-5.8z"/><path d="M816 57.4l3.3 1.5 5.4-2.6M819.3 58.9v1.9"/></g><g stroke="#c5c5c5" stroke-width="1.2" fill="none"><path d="M944.9 52.3c.5 2.6 1.9 4 4.5 4.6-2.6.5-4 1.9-4.5 4.5-.5-2.6-1.9-4-4.5-4.5 2.6-.6 4-2 4.5-4.6z"/><path d="M950.9 60.1c.4 1.6 1.2 2.4 2.8 2.8-1.6.4-2.4 1.2-2.8 2.8-.4-1.6-1.2-2.4-2.8-2.8 1.6-.4 2.4-1.2 2.8-2.8z"/></g></svg></div></body></html>
